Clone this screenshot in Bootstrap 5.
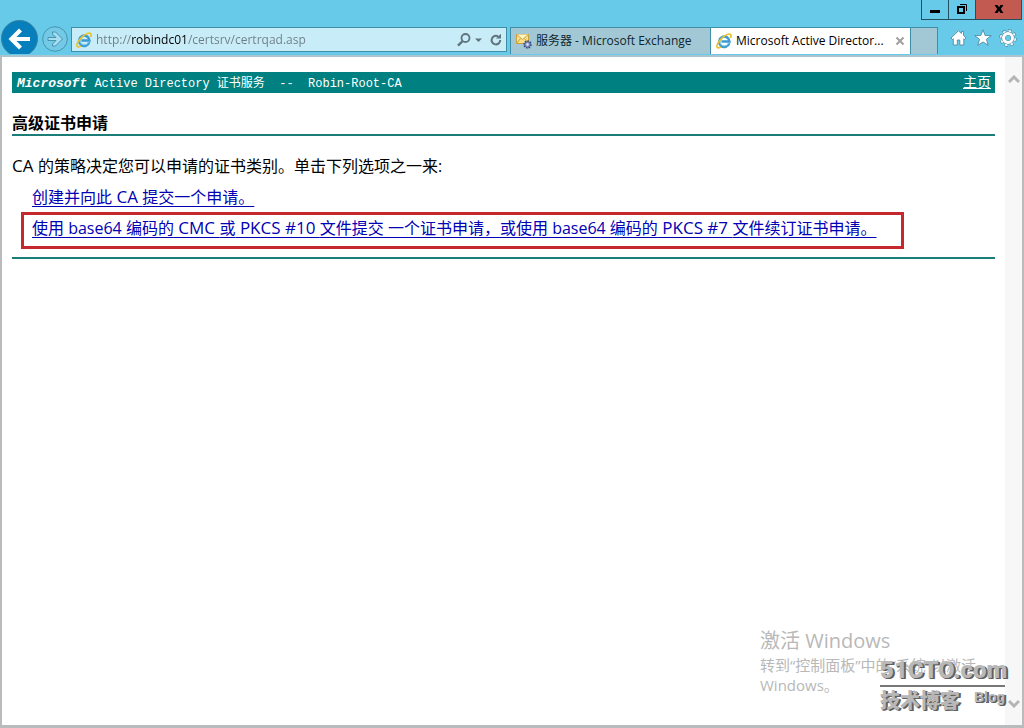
<!DOCTYPE html>
<html lang="zh-CN">
<head>
<meta charset="utf-8">
<meta name="viewport" content="width=device-width, initial-scale=1">
<title>Microsoft Active Directory 证书服务</title>
<link href="https://cdn.jsdelivr.net/npm/bootstrap@5.3.0/dist/css/bootstrap.min.css" rel="stylesheet">
<style>
  body { font-family: "Open Sans", "Noto Sans CJK SC", sans-serif; font-size: 16px; line-height: 24px; color: #000; background: #67cae9; }
  button { border: 0; padding: 0; background: none; }
  svg { display: block; flex: none; }

  .chrome-top { height: 20px; padding-right: 2px; }
  .win-btn { width: 28px; height: 20px; border: 1px solid #234f60; border-top: 0; margin-left: -1px; color: #000; }
  .win-btn.shut { width: 47px; background: #c35a51; }

  .toolbar { height: 34px; padding-left: 1px; }
  .address { height: 25px; margin: 7px 3px 0 3px; padding: 0 4px; background: #c9edf8; border: 1px solid #3f8ea8; }
  .address input { border: 0; outline: 0; padding: 0; height: 23px; font-size: 12px; line-height: 23px; min-width: 0; margin-left: 4px;
    color: #6c7d84; -webkit-text-fill-color: transparent;
    background: linear-gradient(90deg, #6c7d84 35px, #000 35px, #000 91px, #6c7d84 91px); -webkit-background-clip: text; background-clip: text; }
  .browser-tabs { margin-top: 7px; border: 1px solid #3f8ea8; border-bottom: 0; }
  .browser-tab { width: 200px; padding: 0 5px; font-size: 12px; line-height: 26px; background: #a2c8d6; color: #10262e; border-right: 1px solid #3f8ea8; white-space: nowrap; }
  .browser-tab.current { background: #fff; color: #000; }
  .new-tab { width: 26px; background: #a2c8d6; }
  .tools { width: 86px; gap: 7px; padding: 9px 7px 0 0; }

  .viewport-frame { border: 2px solid #b9bcbd; border-top-color: #a9c6d0; border-width: 2px 2px 3px; margin-top: 1px; background: #fff; }
  .document { padding: 15px 10px 16px; }
  .banner { height: 21px; background: #008080; color: #fff; padding: 0 4px 0 5px; }
  .banner-name { font-family: "Liberation Mono", "Noto Sans CJK SC", monospace; font-size: 12px; line-height: 23px; white-space: pre; }
  .banner-name b { font-size: 13px; }
  .banner a { color: #fff; font-size: 14px; line-height: 20px; }
  .page-title { font-size: 16px; line-height: 24px; font-weight: 700; margin: 18px 0 0; height: 25px; border-bottom: 2px solid #1c7c78; }
  .caps { font-size: 17px; line-height: 20px; }
  .intro { margin: 18px 0 0; }
  .choices { margin: 7px 0 0; }
  .choices a { color: #0000b4; text-underline-offset: 3px; }
  .choices li { padding-left: 20px; }
  .choices li.picked { width: 883px; max-width: 100%; margin: 3px 0 0 9px; padding: 1px 0 6px 8px; border: 3px solid #c5292f; }
  .end-rule { border: 0; border-top: 2px solid #1c7c78; opacity: 1; margin: 8px 0 0; }
  .scroller { width: 17px; background: #f7f7f7; padding: 18px 0 17px; }

  .activate { right: 28px; bottom: 30px; width: 234px; color: #b8b8b8; font-size: 15px; line-height: 20px; }
  .activate strong { display: block; font-size: 20px; line-height: 28px; font-weight: 400; }
  .blogmark { right: 17px; bottom: 11px; width: 125px; color: #b8b8b8; text-shadow: 1px 1px 0 #606060, 2px 1px 0 #606060; }
  .blogmark .site { font-family: Roboto, "Liberation Sans", sans-serif; font-weight: 900; font-size: 24px; line-height: 30px; border-bottom: 2px solid #777; white-space: nowrap; }
  .blogmark .cn { font-size: 20px; line-height: 27px; font-weight: 900; }
  .blogmark .en { font-family: "Liberation Sans", sans-serif; font-size: 14px; line-height: 20px; font-weight: 700; }
</style>
</head>
<body class="d-flex flex-column min-vh-100 m-0">

<svg width="0" height="0" class="position-absolute" aria-hidden="true">
  <symbol id="ie" viewBox="0 0 16 16">
    <path d="M13.300 10.200A5.200 5.200 0 1 1 13.500 8.600H5.400" fill="none" stroke="#3b9bd2" stroke-width="2.500"/>
    <path d="M12.800 10.200A4.900 4.900 0 0 1 3.600 9" fill="none" stroke="#7bcbee" stroke-width="1"/>
    <path d="M14.600 5C15.500 2.500 15.200.8 13.200 1 9 1.500 1 8.500.9 13.300c0 2 1.800 1.900 4 .7" fill="none" stroke="#e9c22c" stroke-width="1.700"/>
  </symbol>
</svg>

<header>
  <div class="chrome-top d-flex justify-content-end">
    <button class="win-btn d-flex justify-content-center" aria-label="最小化"><svg width="12" height="19" viewBox="0 0 12 19"><path d="M1 10h10v3H1z"/></svg></button>
    <button class="win-btn d-flex justify-content-center" aria-label="还原"><svg width="12" height="19" viewBox="0 0 12 19"><path d="M4 4.500h6.500V11" fill="none" stroke="#000"/><path d="M2 7h6v6H2z" fill="none" stroke="#000" stroke-width="2"/></svg></button>
    <button class="win-btn shut d-flex justify-content-center" aria-label="关闭"><svg width="12" height="19" viewBox="0 0 12 19"><path d="M1.500 5h3L6 7.200 7.500 5h3L7.800 9l2.700 4h-3L6 10.800 4.500 13h-3l2.700-4z"/></svg></button>
  </div>
  <div class="toolbar d-flex align-items-start">
    <button aria-label="后退"><svg width="37" height="34" viewBox="0 0 37 34"><circle cx="18.500" cy="18.500" r="18" fill="#087fbd" stroke="#377f9d"/><path d="M29 19H11M19.500 10 10.500 19l9 9" fill="none" stroke="#fff" stroke-width="4.200"/></svg></button>
    <button class="ms-1" aria-label="前进"><svg width="26" height="34" viewBox="0 0 26 34"><circle cx="13" cy="19" r="12.300" fill="#73c9e6" stroke="#4594b0"/><path d="M6 17.500h8l-3.500-3.500v-2h3l7 7-7 7h-3v-2l3.500-3.500H6z" fill="#a5def0" stroke="#4594b0"/></svg></button>
    <form class="address d-flex align-items-center flex-grow-1">
      <svg width="16" height="16"><use href="#ie"/></svg>
      <input class="flex-grow-1" type="text" aria-label="地址" value="http://robindc01/certsrv/certrqad.asp">
      <button type="button" aria-label="搜索"><svg width="14" height="16" viewBox="0 0 14 16"><circle cx="8.500" cy="6" r="4" fill="none" stroke="#5f757d" stroke-width="1.800"/><path d="M5.700 9 1 13.700" stroke="#5f757d" stroke-width="2.400"/></svg></button>
      <button type="button" class="ms-1" aria-label="显示列表"><svg width="7" height="16"><path d="M0 6.500h7L3.500 10z" fill="#5f757d"/></svg></button>
      <button type="button" class="ms-2" aria-label="刷新"><svg width="12" height="16" viewBox="0 0 12 16"><path d="M10.200 8a4.300 4.300 0 1 1-2-3.500" fill="none" stroke="#5f757d" stroke-width="2"/><path d="M6 6.500h5V1.800z" fill="#5f757d"/></svg></button>
    </form>
    <nav class="browser-tabs d-flex" aria-label="选项卡">
      <div class="browser-tab d-flex align-items-center">
        <svg width="16" height="16" viewBox="0 0 16 16"><path d="M.5 1.500h12v9H.5z" fill="#fbe18d" stroke="#caa23c"/><path d="m.5 1.500 6 5 6-5M.5 10.500l4-5M12.500 10.500l-4-5" fill="#fff4c4" stroke="#caa23c"/><circle cx="11.500" cy="11.500" r="3.300" fill="#8290c5" stroke="#35477f" stroke-width="1.800" stroke-dasharray="1.500 1"/><circle cx="11.500" cy="11.500" r="1.200" fill="#e6eaff"/></svg>
        <span class="ms-1">服务器 - Microsoft Exchange</span>
      </div>
      <div class="browser-tab current d-flex align-items-center">
        <svg width="16" height="16"><use href="#ie"/></svg>
        <span class="ms-1 flex-grow-1">Microsoft Active Director...</span>
        <button aria-label="关闭选项卡"><svg width="10" height="10" viewBox="0 0 10 10"><path d="m1.500 1.500 7 7m0-7-7 7" stroke="#a0a0a0" stroke-width="2"/></svg></button>
      </div>
      <button class="new-tab" aria-label="新建选项卡"></button>
    </nav>
    <div class="tools d-flex justify-content-end">
      <button aria-label="主页"><svg width="17" height="18" viewBox="0 0 17 18"><path d="M8.500 1.800 1 9l1.500 1.500.8-.8V16h4v-5h2.500v5h4V9.700l.8.8L16 9l-2.500-2.500v-4h-2v2z" fill="#fff" stroke="#45829a" stroke-width=".8"/></svg></button>
      <button aria-label="收藏夹"><svg width="18" height="18" viewBox="0 0 18 18"><path d="m9 .8 2.100 5.700 6.200.1-4.900 3.700 1.800 6L9 12.900l-5.200 3.400 1.800-6L.7 6.600l6.200-.1z" fill="#fff" stroke="#45829a" stroke-width=".8"/></svg></button>
      <button aria-label="工具"><svg width="18" height="18" viewBox="0 0 18 18"><circle cx="9" cy="9" r="6.600" fill="none" stroke="#45829a" stroke-width="4.200" stroke-dasharray="3 2.180"/><circle cx="9" cy="9" r="6.600" fill="none" stroke="#fff" stroke-width="3" stroke-dasharray="2.400 2.780" stroke-dashoffset="-.3"/><circle cx="9" cy="9" r="4.500" fill="none" stroke="#45829a" stroke-width="4"/><circle cx="9" cy="9" r="4.500" fill="none" stroke="#fff" stroke-width="3"/></svg></button>
    </div>
  </div>
</header>

<div class="viewport-frame d-flex flex-grow-1 position-relative">
  <main class="document flex-grow-1">
    <div class="banner d-flex justify-content-between">
      <div class="banner-name"><b><i>Microsoft</i></b> Active Directory 证书服务  --  Robin-Root-CA</div>
      <a href="#">主页</a>
    </div>
    <h1 class="page-title">高级证书申请</h1>
    <p class="intro"><span class="caps">CA </span>的策略决定您可以申请的证书类别。单击下列选项之一来:</p>
    <ul class="choices list-unstyled">
      <li><a href="#">创建并向此<span class="caps"> CA </span>提交一个申请。</a></li>
      <li class="picked"><a href="#">使用 base64 编码的<span class="caps"> CMC </span>或<span class="caps"> PKCS #10 </span>文件提交 一个证书申请，或使用 base64 编码的<span class="caps"> PKCS #7 </span>文件续订证书申请。</a></li>
    </ul>
    <hr class="end-rule">
  </main>
  <div class="scroller d-flex flex-column justify-content-between align-items-center">
    <svg width="12" height="9" viewBox="0 0 12 9"><path d="m1 7 5-5 5 5" fill="none" stroke="#b5b5b5" stroke-width="3"/></svg>
    <svg width="12" height="9" viewBox="0 0 12 9"><path d="m1 2 5 5 5-5" fill="none" stroke="#b5b5b5" stroke-width="3"/></svg>
  </div>

  <div class="activate position-absolute"><strong>激活 Windows</strong>转到“控制面板”中的“系统”以激活 Windows。</div>
  <div class="blogmark position-absolute">
    <div class="site">51CTO.com</div>
    <div class="d-flex justify-content-between"><span class="cn">技术博客</span><span class="en">Blog</span></div>
  </div>
</div>

<script src="https://cdn.jsdelivr.net/npm/bootstrap@5.3.0/dist/js/bootstrap.bundle.min.js"></script>
</body>
</html>
